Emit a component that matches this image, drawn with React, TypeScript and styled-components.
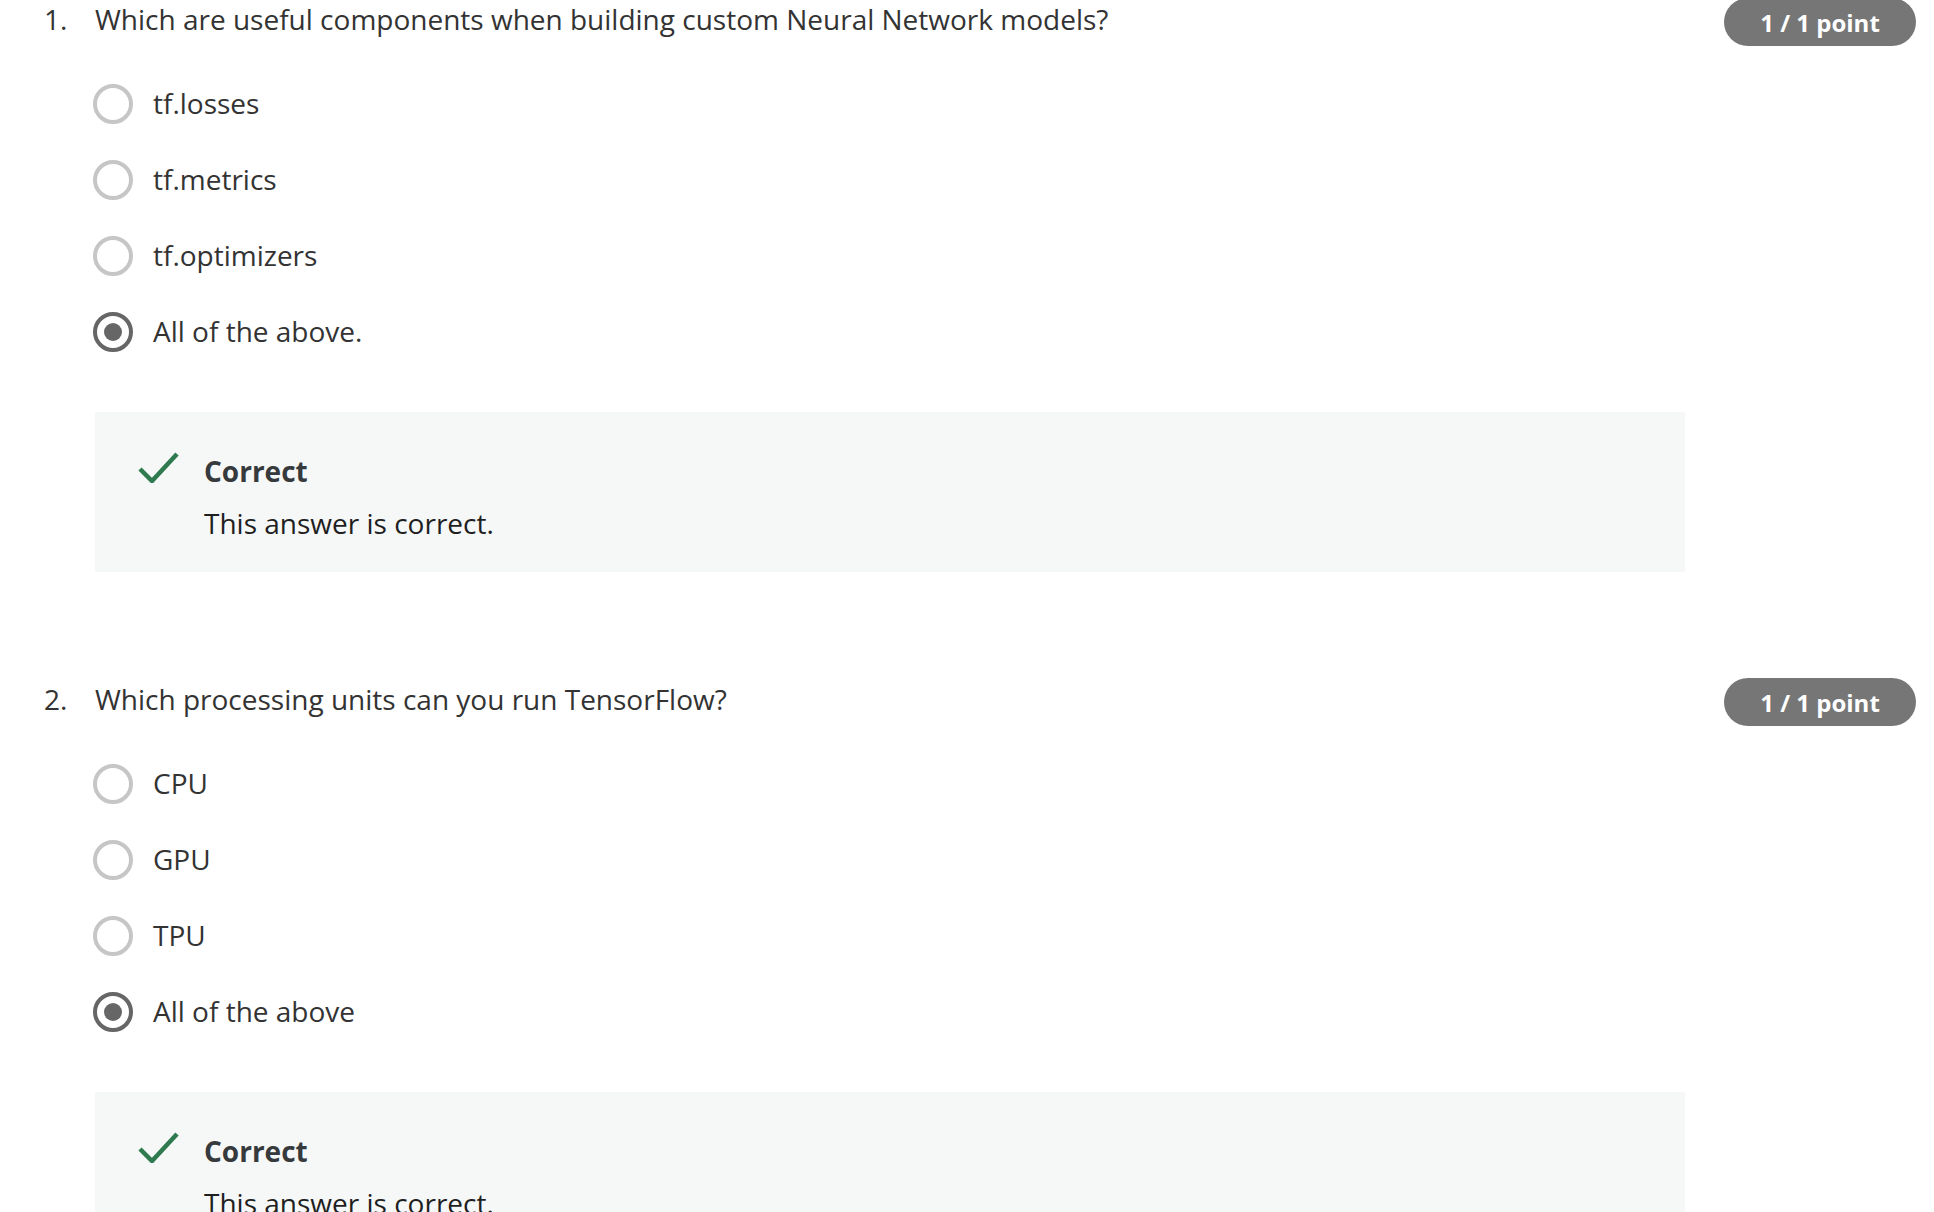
import React from "react";
import styled, { createGlobalStyle } from "styled-components";

const GlobalStyle = createGlobalStyle`
  html, body { margin: 0; padding: 0; background: #ffffff; }
  body { font-family: "Open Sans", "Noto Sans", sans-serif; color: #333333; overflow: hidden; }
`;

const Page = styled.div`
  display: flex;
  flex-direction: column;
  gap: 106px;
  margin-top: -2px;
  padding: 0 18px 0 44px;
`;

const Question = styled.section`
  display: grid;
  grid-template-columns: 51px 1fr 192px;
  column-gap: 0;
  align-items: start;
`;

const Number = styled.div`
  font-size: 28px;
  line-height: 42px;
  color: #333333;
`;

const Body = styled.div`
  display: flex;
  flex-direction: column;
  margin-right: 39px;
`;

const Prompt = styled.div`
  font-size: 28px;
  line-height: 42px;
  color: #333333;
`;

const Options = styled.div`
  display: flex;
  flex-direction: column;
  gap: 32px;
  margin-top: 42px;
  margin-left: -2px;
`;

const Option = styled.label`
  display: flex;
  align-items: center;
  gap: 20px;
  height: 44px;
  font-size: 28px;
  line-height: 40px;
  color: #333333;
`;

const OptionLabel = styled.span`
  padding-bottom: 2px;
`;

const Radio = styled.span<{ $checked?: boolean }>`
  box-sizing: border-box;
  width: 40px;
  height: 40px;
  border-radius: 50%;
  border: 4px solid ${(p) => (p.$checked ? "#666666" : "#c6c6c6")};
  display: flex;
  align-items: center;
  justify-content: center;
  flex-shrink: 0;
  &::after {
    content: "";
    display: ${(p) => (p.$checked ? "block" : "none")};
    width: 18px;
    height: 18px;
    border-radius: 50%;
    background: #666666;
  }
`;

const Feedback = styled.div`
  margin-top: 58px;
  background: #f6f8f7;
  padding: 40px 43px 28px;
  display: flex;
  align-items: flex-start;
  gap: 25px;
`;

const FeedbackText = styled.div`
  display: flex;
  flex-direction: column;
  gap: 11px;
`;

const FeedbackTitle = styled.div`
  font-size: 28px;
  line-height: 39px;
  font-weight: 700;
  color: #373a3c;
`;

const FeedbackNote = styled.div`
  font-size: 28px;
  line-height: 42px;
  color: #1f1f1f;
`;

const Badge = styled.div`
  box-sizing: border-box;
  width: 192px;
  height: 48px;
  border-radius: 24px;
  background: #767676;
  color: #ffffff;
  font-weight: 700;
  font-size: 24px;
  display: flex;
  align-items: center;
  justify-content: center;
`;

const CheckIcon = () => (
  <svg width="41" height="31" viewBox="0 0 41 31" style={{ flexShrink: 0 }}>
    <path d="M2 17 L14 29 L39 2" fill="none" stroke="#2f7a4f" strokeWidth="4.5" />
  </svg>
);

type Q = { n: number; text: string; options: string[]; selected: number };

const questions: Q[] = [
  {
    n: 1,
    text: "Which are useful components when building custom Neural Network models?",
    options: ["tf.losses", "tf.metrics", "tf.optimizers", "All of the above."],
    selected: 3,
  },
  {
    n: 2,
    text: "Which processing units can you run TensorFlow?",
    options: ["CPU", "GPU", "TPU", "All of the above"],
    selected: 3,
  },
];

export default function App() {
  return (
    <>
      <GlobalStyle />
      <Page>
        {questions.map((q) => (
          <Question key={q.n}>
            <Number>{q.n}.</Number>
            <Body>
              <Prompt>{q.text}</Prompt>
              <Options>
                {q.options.map((o, i) => (
                  <Option key={o}>
                    <Radio $checked={i === q.selected} />
                    <OptionLabel>{o}</OptionLabel>
                  </Option>
                ))}
              </Options>
              <Feedback>
                <CheckIcon />
                <FeedbackText>
                  <FeedbackTitle>Correct</FeedbackTitle>
                  <FeedbackNote>This answer is correct.</FeedbackNote>
                </FeedbackText>
              </Feedback>
            </Body>
            <Badge>1 / 1 point</Badge>
          </Question>
        ))}
      </Page>
    </>
  );
}
